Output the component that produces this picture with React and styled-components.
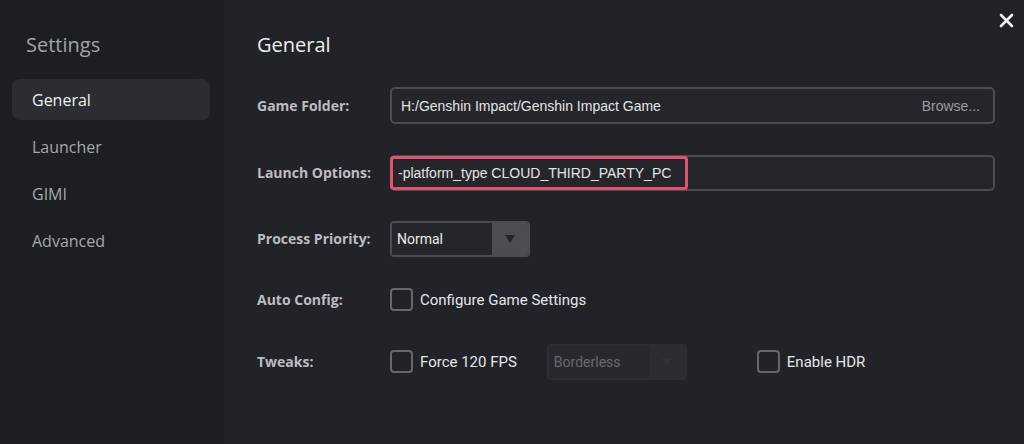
import styled, { createGlobalStyle } from 'styled-components'

const Global = createGlobalStyle`
  html, body { margin: 0; padding: 0; background: #222328; }
  * { box-sizing: border-box; }
`

const Window = styled.div`
  position: relative;
  display: flex;
  width: 1024px;
  height: 444px;
  background: #222328;
  font-family: "Open Sans", "Noto Sans", sans-serif;
  overflow: hidden;
`

const Sidebar = styled.aside`
  width: 224px;
  flex-shrink: 0;
  background: #1d1e22;
  padding-top: 32px;
`

const SideTitle = styled.div`
  margin: 0 34px 0 23px;
  padding: 0 0 14px 3px;
  font-size: 20px;
  line-height: 26px;
  color: #a3a3a6;
  border-bottom: 1px solid #222328;
`

const Nav = styled.nav`
  display: flex;
  flex-direction: column;
  gap: 6px;
  margin-top: 6px;
  padding-left: 12px;
`

const NavItem = styled.div`
  width: 198px;
  height: 41px;
  display: flex;
  align-items: center;
  padding-left: 20px;
  border-radius: 8px;
  font-size: 16px;
  color: ${p => (p.active ? '#f2f2f2' : '#a7a7aa')};
  background: ${p => (p.active ? '#2c2d32' : 'transparent')};
`

const Main = styled.main`
  flex: 1;
  padding: 32px 29px 0 33px;
`

const Heading = styled.h1`
  margin: 0;
  font-size: 20px;
  font-weight: 400;
  line-height: 26px;
  color: #ededed;
`

const Row = styled.div`
  display: flex;
  align-items: center;
  height: 37px;
  margin-top: ${p => p.top}px;
`

const Label = styled.div`
  width: 133px;
  flex-shrink: 0;
  font-size: 14px;
  font-weight: 700;
  color: #bdbdc0;
`

const Field = styled.div`
  position: relative;
  flex: 1;
  height: ${p => p.h || 37}px;
  display: flex;
  align-items: center;
  justify-content: space-between;
  padding: 0 13px 0 ${p => p.pl || 9}px;
  border: 2px solid #4c4d52;
  border-radius: 5px;
  background: #25262b;
  font-family: "Liberation Sans", Arial, sans-serif;
  font-size: 14px;
  color: #e4e4e4;
`

const Browse = styled.span`
  color: #9c9c9f;
`

const Highlight = styled.div`
  position: absolute;
  left: -2px;
  top: -1px;
  bottom: -1px;
  width: 298px;
  border: 3px solid #e2526b;
  border-radius: 4px;
`

const Select = styled.div`
  width: 140px;
  height: 36px;
  display: flex;
  border: 2px solid ${p => (p.disabled ? '#2d2e33' : '#4c4d52')};
  border-radius: 4px;
  overflow: hidden;
  margin-left: ${p => p.ml || 0}px;
  font-family: "Roboto", "Open Sans", sans-serif;
  font-size: 14px;
`

const SelectValue = styled.div`
  flex: 1;
  display: flex;
  align-items: center;
  padding-left: 5px;
  background: ${p => (p.disabled ? '#28292e' : '#25262b')};
  color: ${p => (p.disabled ? '#68686c' : '#ececec')};
`

const SelectArrow = styled.div`
  width: 36px;
  display: flex;
  align-items: center;
  justify-content: center;
  background: ${p => (p.disabled ? '#2c2d32' : '#4d4e53')};
  &::after {
    content: '';
    border-left: 5px solid transparent;
    border-right: 5px solid transparent;
    border-top: 8px solid ${p => (p.disabled ? '#33343a' : '#25262a')};
  }
`

const Check = styled.label`
  display: flex;
  align-items: center;
  gap: 7px;
  margin-left: ${p => p.ml || 0}px;
  font-family: "Roboto", "Open Sans", sans-serif;
  font-size: 15px;
  color: #e6e6e8;
`

const Box = styled.span`
  width: 23px;
  height: 23px;
  border: 2px solid #66676c;
  border-radius: 4px;
`

const Close = styled.div`
  position: absolute;
  top: 11px;
  right: 10px;
  width: 15px;
  height: 15px;
`

export default function App() {
  return (
    <Window>
      <Global />
      <Sidebar>
        <SideTitle>Settings</SideTitle>
        <Nav>
          <NavItem active>General</NavItem>
          <NavItem>Launcher</NavItem>
          <NavItem>GIMI</NavItem>
          <NavItem>Advanced</NavItem>
        </Nav>
      </Sidebar>
      <Main>
        <Heading>General</Heading>
        <Row top={29}>
          <Label>Game Folder:</Label>
          <Field>
            <span>H:/Genshin Impact/Genshin Impact Game</span>
            <Browse>Browse...</Browse>
          </Field>
        </Row>
        <Row top={30}>
          <Label>Launch Options:</Label>
          <Field h={36} pl={6}>
            <span>-platform_type CLOUD_THIRD_PARTY_PC</span>
            <Highlight />
          </Field>
        </Row>
        <Row top={29}>
          <Label>Process Priority:</Label>
          <Select>
            <SelectValue>Normal</SelectValue>
            <SelectArrow />
          </Select>
        </Row>
        <Row top={24}>
          <Label>Auto Config:</Label>
          <Check>
            <Box />
            Configure Game Settings
          </Check>
        </Row>
        <Row top={25}>
          <Label>Tweaks:</Label>
          <Check>
            <Box />
            Force 120 FPS
          </Check>
          <Select disabled ml={30}>
            <SelectValue disabled>Borderless</SelectValue>
            <SelectArrow disabled />
          </Select>
          <Check ml={70}>
            <Box />
            Enable HDR
          </Check>
        </Row>
      </Main>
      <Close>
        <svg width="15" height="15" viewBox="0 0 15 15">
          <path d="M2 2 L13 13 M13 2 L2 13" stroke="#f4f4f4" strokeWidth="2.6" strokeLinecap="round" />
        </svg>
      </Close>
    </Window>
  )
}
